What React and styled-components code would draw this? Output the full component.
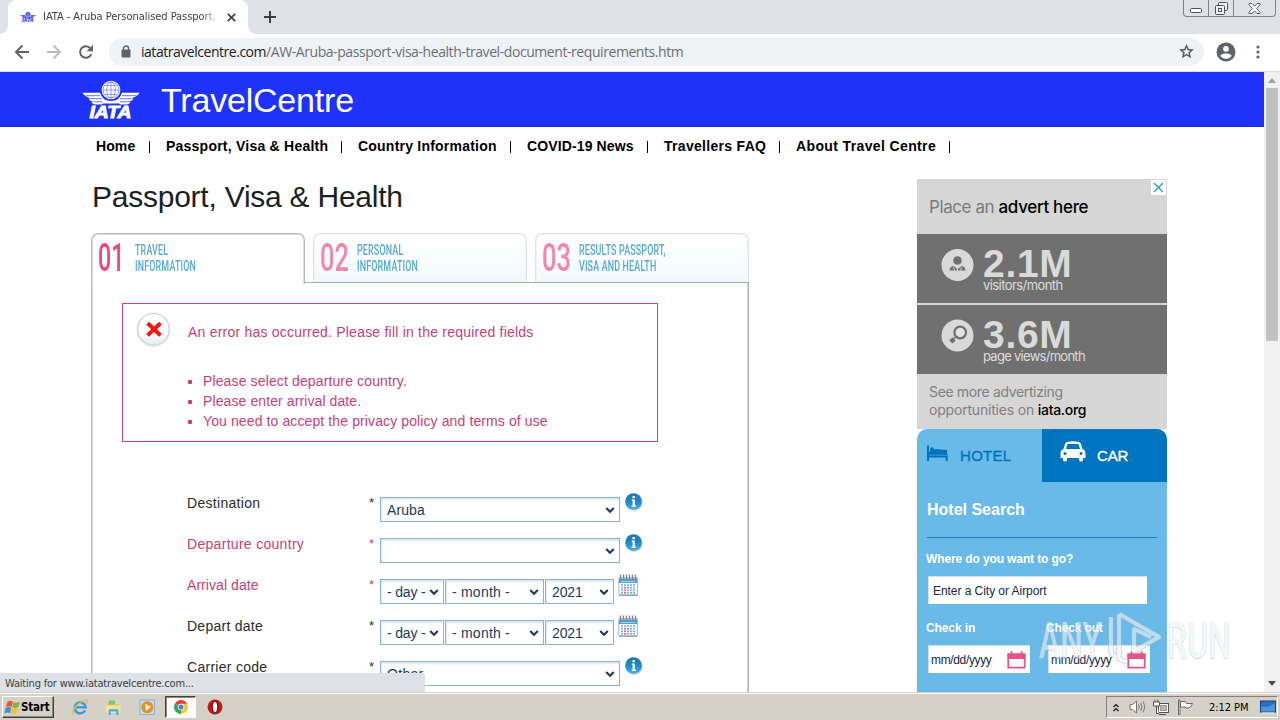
import React from "react";
import styled, { createGlobalStyle, css } from "styled-components";

const GlobalStyle = createGlobalStyle`
  *, *::before, *::after { box-sizing: border-box; }
  html, body { margin: 0; padding: 0; background: #fff; overflow: hidden; }
  body { font-family: "Liberation Sans", Arial, sans-serif; color: #222; }
  svg { display: block; flex: none; }
`;

const uiFont = `"DejaVu Sans Condensed", Tahoma, sans-serif`;
const adFont = `Inter, sans-serif`;
const pink = "#c73f78";

const Txt = styled.span`
  letter-spacing: ${(p) => p.$ls || 0}px;
  white-space: nowrap;
`;

const Desktop = styled.div`
  position: relative;
  width: 1280px;
  height: 720px;
  display: flex;
  flex-direction: column;
  overflow: hidden;
`;

/* ---------- browser chrome ---------- */
const TabStrip = styled.div`
  height: 34px;
  flex: none;
  background: #dee1e6;
  display: flex;
  align-items: flex-start;
  padding-left: 8px;
`;
const BrowserTab = styled.div`
  position: relative;
  width: 240px;
  height: 34px;
  background: #fff;
  border-radius: 8px 8px 0 0;
  display: flex;
  align-items: center;
  padding: 0 12px 0 12px;
  &::before, &::after {
    content: "";
    position: absolute;
    bottom: 0;
    width: 8px;
    height: 8px;
  }
  &::before { left: -8px; background: radial-gradient(circle at 0 0, transparent 7.5px, #fff 8px); }
  &::after { right: -8px; background: radial-gradient(circle at 100% 0, transparent 7.5px, #fff 8px); }
`;
const TabTitle = styled.div`
  width: 174px;
  margin-left: 7px;
  margin-right: 11px;
  overflow: hidden;
  white-space: nowrap;
  font: 11px/16px ${uiFont};
  letter-spacing: -0.04px;
  color: #3c4043;
  mask-image: linear-gradient(90deg, #000 158px, transparent 178px);
`;
const NewTab = styled.div`padding: 10px 0 0 15px;`;
const WindowButtons = styled.div`
  margin-left: auto;
  margin-right: 4px;
  width: 93px;
  height: 17px;
  border: 1px solid #7d828c;
  border-top: 0;
  border-radius: 0 0 4px 4px;
  display: flex;
`;
const WindowButton = styled.div`
  width: ${(p) => p.$w}px;
  display: flex;
  justify-content: center;
  align-items: center;
  padding-top: ${(p) => p.$pt || 0}px;
  & + & { border-left: 1px solid #7d828c; }
`;
const Toolbar = styled.div`
  height: 38px;
  flex: none;
  display: flex;
  align-items: center;
  padding: 0 14px 2px;
  border-bottom: 1px solid #dadce0;
`;
const NavIcons = styled.div`
  display: flex;
  gap: 16px;
  width: 95px;
`;
const Omnibox = styled.div`
  width: 1095px;
  height: 28px;
  border-radius: 14px;
  background: #f0f3f5;
  display: flex;
  align-items: center;
  padding: 0 9px 0 12px;
  font: 14px/20px "Open Sans", sans-serif;
  color: #6b7075;
`;
const Host = styled(Txt)`
  margin-left: 10px;
  color: #202124;
`;
const Spacer = styled.div`flex: 1;`;
const Avatar = styled.div`margin: 0 20px 0 12px;`;

/* ---------- page ---------- */
const Viewport = styled.div`
  height: 620px;
  flex: none;
  display: flex;
  overflow: hidden;
`;
const Page = styled.div`
  width: 1264px;
  height: 620px;
  overflow: hidden;
`;
const Scrollbar = styled.div`
  width: 16px;
  background: #f1f1f1;
  display: flex;
  flex-direction: column;
  align-items: center;
  padding: 6px 0 6px;
`;
const Thumb = styled.div`
  width: 12px;
  height: 253px;
  margin-top: 5px;
  background: #c1c1c1;
`;
const Banner = styled.header`
  height: 55px;
  background: #1e32fa;
  border-bottom: 1px solid #1a2ad2;
  display: flex;
  align-items: center;
  padding: 2px 0 0 82px;
`;
const BannerTitle = styled.h1`
  margin: 0 0 0 21px;
  font-weight: 400;
  font-size: 34px;
  line-height: 38px;
  letter-spacing: -0.2px;
  color: #fff;
`;
const NavBar = styled.nav`
  height: 50px;
  display: flex;
  padding: 11px 0 0 96px;
`;
const NavItem = styled.div`
  width: ${(p) => p.$w}px;
  margin-right: 16px;
  display: flex;
  justify-content: space-between;
  font-weight: 700;
  font-size: 14px;
  line-height: 16px;
  color: #000;
  &::after {
    content: "";
    width: 1px;
    height: 12px;
    margin-top: 3px;
    background: #000;
  }
`;
const Columns = styled.div`
  display: flex;
  align-items: flex-start;
`;
const MainColumn = styled.main`
  width: 658px;
  margin-left: 91px;
`;
const Heading = styled.h2`
  margin: 3px 0 19px 1px;
  font-weight: 400;
  font-size: 30px;
  line-height: 34px;
  letter-spacing: -0.24px;
  color: #1c1f22;
`;
const StepTabs = styled.div`
  display: flex;
  justify-content: space-between;
  height: 50px;
`;
const StepTab = styled.div`
  width: 214px;
  height: ${(p) => (p.$active ? 51 : 49)}px;
  display: flex;
  padding: 7px 0 0 6px;
  border-radius: 7px 7px 0 0;
  border: 1px solid #dfe3e5;
  border-bottom: 0;
  box-shadow: inset 0 0 0 1px #f1f3f4;
  background: linear-gradient(#fff 20%, #f1f9fe);
  ${(p) => p.$active && css`
    position: relative;
    z-index: 1;
    border-color: #b9b9b9;
    box-shadow: inset 1px 1px #dedede, inset -1px 0 #dedede;
    background: #fff;
  `}
`;
const StepNumber = styled.div`
  width: 34px;
  margin-top: -2px;
  font: 500 38px/38px Roboto, sans-serif;
  white-space: nowrap;
  transform: scaleX(${(p) => p.$sx});
  transform-origin: 0 0;
  color: ${(p) => (p.$active ? "#ee4484" : "#f584ae")};
`;
const StepLabel = styled.div`
  width: 0;
  margin-left: 3px;
  margin-top: 1px;
  font: 500 15.5px/16px Roboto, sans-serif;
  letter-spacing: 0.3px;
  white-space: nowrap;
  transform: scaleX(0.575);
  transform-origin: 0 0;
  color: #55a9d4;
`;
const Panel = styled.section`
  height: 420px;
  margin-top: -1px;
  border: 1px solid #b4b4b4;
  border-top-color: #a6adb1;
  box-shadow: inset 1px 0 #dcdcdc, inset -1px 0 #d4d4d4;
  padding: 20px 30px;
`;
const ErrorBox = styled.div`
  width: 536px;
  height: 139px;
  border: 1px solid #c9437b;
  display: flex;
  padding: 8px 0 0 13px;
  color: ${pink};
  font-size: 14px;
`;
const ErrorBody = styled.div`
  margin-left: 15px;
  padding-top: 12px;
  line-height: 16px;
`;
const ErrorList = styled.ul`
  margin: 31px 0 0;
  padding: 0;
  list-style: none;
  line-height: 20px;
`;
const ErrorItem = styled.li`
  display: flex;
  align-items: center;
  &::before {
    content: "";
    width: 4px;
    height: 4px;
    border-radius: 1px;
    margin: 2px 11px 0 0;
    background: ${pink};
  }
`;
const Form = styled.div`margin: 51px 0 0 65px;`;
const FormRow = styled.div`
  height: 41px;
  display: flex;
  align-items: flex-start;
  font-size: 14px;
  line-height: 16px;
  color: ${(p) => (p.$error ? pink : "#2c2c2c")};
`;
const FieldLabel = styled.div`
  width: 182px;
  padding-top: 2px;
`;
const Star = styled.div`
  width: 11px;
  padding-top: 2px;
  font-size: 13px;
`;
const Controls = styled.div`
  display: flex;
  padding-top: 4px;
  gap: 1px;
`;
const Select = styled.div`
  width: ${(p) => p.$w}px;
  height: 25px;
  border: 1px solid #86b4d4;
  box-shadow: inset 1px 2px 2px #dfe6ec;
  background: #fff;
  display: flex;
  align-items: center;
  justify-content: space-between;
  padding: 1px 4px 0 6px;
  color: #1d3a5f;
`;
const IconSlot = styled.div`
  margin-left: ${(p) => p.$ml}px;
  margin-top: ${(p) => p.$mt || 0}px;
`;

/* ---------- sidebar ---------- */
const Sidebar = styled.aside`
  width: 250px;
  margin: 2px 0 0 168px;
`;
const Ad = styled.div`
  position: relative;
  height: 250px;
  font-family: ${adFont};
  background: #d6d6d6;
`;
const AdClose = styled.div`
  position: absolute;
  top: 1px;
  right: 1px;
  width: 15px;
  height: 15px;
  background: #fff;
  display: flex;
  align-items: center;
  justify-content: center;
`;
const AdHead = styled.div`
  height: 55px;
  padding: 17px 0 0 12px;
  font-size: 17px;
  line-height: 22px;
  color: #7a7a7a;
  b { font-weight: 500; color: #000; }
`;
const AdStat = styled.div`
  height: 69px;
  margin-bottom: ${(p) => p.$mb || 0}px;
  background: #707070;
  display: flex;
  padding: 14px 0 0 24px;
`;
const AdStatText = styled.div`
  margin-left: 8px;
  display: flex;
  flex-direction: column;
`;
const AdNumber = styled(Txt)`
  margin-top: -2px;
  font: 700 39px/36px "Liberation Sans", sans-serif;
  color: #dadada;
`;
const AdCaption = styled(Txt)`
  margin-top: -5px;
  font-size: 13px;
  line-height: 16px;
  color: #dcdcdc;
`;
const AdFoot = styled.div`
  height: 55px;
  padding: 9px 0 0 12px;
  font-size: 14px;
  line-height: 18px;
  color: #808080;
  b { font-weight: 500; color: #000; }
`;
const Widget = styled.div`
  height: 300px;
  border-radius: 10px 10px 0 0;
  overflow: hidden;
  background: #69b9e9;
  color: #fff;
  font-weight: 700;
  font-size: 12px;
`;
const WidgetTabs = styled.div`
  display: flex;
  height: 53px;
`;
const WidgetTab = styled.div`
  width: 125px;
  display: flex;
  padding: ${(p) => p.$pad};
  gap: ${(p) => p.$gap}px;
  font: 400 15px/18px "Liberation Sans", sans-serif;
  -webkit-text-stroke: 0.35px currentColor;
  color: ${(p) => (p.$dark ? "#fff" : "#0072bc")};
  background: ${(p) => (p.$dark ? "#0075bf" : "transparent")};
`;
const WidgetTabText = styled(Txt)`padding-top: ${(p) => p.$pt}px;`;
const WidgetTitle = styled.div`
  margin: 0 10px;
  height: 56px;
  padding-top: 19px;
  font-size: 16px;
  line-height: 18px;
  border-bottom: 1px solid #1780c4;
`;
const WidgetLabel = styled.div`
  padding: ${(p) => p.$pt}px 0 0 9px;
  width: ${(p) => p.$w || 250}px;
  line-height: 14px;
`;
const TextInput = styled.div`
  width: ${(p) => p.$w}px;
  height: 28px;
  margin-left: ${(p) => p.$ml}px;
  padding: 1px 4px 0 ${(p) => p.$pl}px;
  background: #fff;
  box-shadow: inset 1px 1px 1px #d5dbe0;
  display: flex;
  align-items: center;
  justify-content: space-between;
  font-weight: 400;
  font-size: 12px;
  line-height: 14px;
  color: #14284b;
`;
const Row = styled.div`
  display: flex;
  margin-top: ${(p) => p.$mt || 0}px;
`;

/* ---------- overlays and taskbar ---------- */
const StatusBubble = styled.div`
  position: absolute;
  left: 0;
  top: 673px;
  width: 425px;
  height: 19px;
  padding-left: 5px;
  border-radius: 0 3px 0 0;
  background: #dee1e6;
  font: 11px/21px ${uiFont};
  color: #3c4043;
`;
const Watermark = styled.div`
  position: absolute;
  left: 1039px;
  top: 607px;
  display: flex;
  align-items: center;
  height: 62px;
  opacity: 0.6;
`;
const MarkWord = styled.div`
  width: ${(p) => p.$w}px;
  padding-top: 6px;
  font: 500 50px/62px Roboto, sans-serif;
  white-space: nowrap;
  transform: scaleX(0.64);
  transform-origin: 0 0;
  color: #eef2f4;
  text-shadow: 0 0 1px #a9b3ba, 0 1px 1px #bcc4ca;
`;
const Taskbar = styled.div`
  height: 28px;
  flex: none;
  background: #d5d1c8;
  box-shadow: inset 0 1px #d5d1c8, inset 0 2px #fff;
  display: flex;
  align-items: flex-start;
  padding: 4px 2px 0;
`;
const StartButton = styled.div`
  width: 52px;
  height: 22px;
  border: 1px solid;
  border-color: #fff #404040 #404040 #fff;
  box-shadow: inset -1px -1px #8c887f;
  display: flex;
  align-items: center;
  padding-left: 1px;
  font: 700 11.5px/16px ${uiFont};
  color: #000;
`;
const Launch = styled.div`
  width: ${(p) => p.$w}px;
  height: 22px;
  margin-left: ${(p) => p.$ml}px;
  display: flex;
  align-items: center;
  justify-content: center;
  ${(p) => p.$pressed && css`
    background: #fff;
    border: 1px solid;
    border-color: #404040 #fff #fff #404040;
    box-shadow: inset 1px 1px #8c887f;
  `}
`;
const Tray = styled.div`
  margin-left: auto;
  width: 172px;
  height: 22px;
  border: 1px solid;
  border-color: #85817a #fff #fff #85817a;
  display: flex;
  align-items: center;
  padding-left: 6px;
  font: 11px/16px ${uiFont};
  color: #000;
`;
const Clock = styled(Txt)`margin: 1px 11px 0 15px;`;

/* ---------- icons ---------- */
const IataLogo = ({ w = 58, h = 40, color = "#fff", bg = "#1e32fa" }) => (
  <svg width={w} height={h} viewBox="0 0 58 40" overflow="visible">
    <circle cx="29" cy="10" r="9.300" fill={color} />
    <g fill="none" stroke={bg} strokeWidth="0.550" opacity="0.800">
      <ellipse cx="29" cy="10" rx="4.300" ry="8" />
      <circle cx="29" cy="10" r="8" />
      <path d="M29 2v16M21 10h16M23 5.500h12M23 14.500h12" />
    </g>
    <g fill={color}>
      <path d="M.5 12.800H18q1 4 4.500 6.700L20 24.500h-7q-2.500-.3-3.500-2.600h3.500q-5-.2-6.500-3.300h3.800Q3 17.500.5 12.800z" />
      <path d="M57.500 12.800H40q-1 4-4.500 6.700l2.500 5h7q2.500-.3 3.500-2.600H45q5-.2 6.500-3.300h-3.800q7.300-1.100 9.800-5.800z" />
      <path d="M21.500 19q7.500 4 15 0l2 4.500h-19z" />
    </g>
    <path d="M3.500 15.700H18M9 18.700h11M12.500 21.800H20M54.500 15.700H40M49 18.700H38M45.500 21.800H38" stroke={bg} strokeWidth="0.700" />
    <text x="28.500" y="37.500" textAnchor="middle" textLength="42" lengthAdjust="spacingAndGlyphs" fontFamily="Liberation Sans, sans-serif" fontWeight="700" fontStyle="italic" fontSize="16.500" fill={color} stroke={color} strokeWidth="0.900">IATA</text>
  </svg>
);
const Stroke = ({ d, w = 14, h = 14, c = "#5f6368", sw = 2 }) => (
  <svg width={w} height={h} viewBox={`0 0 ${w} ${h}`} fill="none" stroke={c} strokeWidth={sw}><path d={d} /></svg>
);
const Reload = () => (
  <svg width="16" height="16" viewBox="0 0 16 16" fill="none">
    <path d="M13.300 10.200A5.800 5.800 0 1 1 12.400 4.300" stroke="#5f6368" strokeWidth="2" />
    <path d="M15 .8v6.400H8.600z" fill="#5f6368" />
  </svg>
);
const Lock = () => (
  <svg width="10" height="13" viewBox="0 0 10 13">
    <rect x="0.500" y="4.500" width="9" height="8" rx="1" fill="#5f6368" />
    <path d="M2.500 5V3.500a2.500 2.500 0 0 1 5 0V5" fill="none" stroke="#5f6368" strokeWidth="1.400" />
  </svg>
);
const StarIcon = () => (
  <svg width="17" height="17" viewBox="0 0 24 24">
    <path fill="#4f5358" stroke="#4f5358" strokeWidth="0.400" d="M22 9.240l-7.190-.62L12 2 9.190 8.630 2 9.240l5.460 4.730L5.820 21 12 17.270 18.180 21l-1.630-7.030L22 9.240zM12 15.400l-3.760 2.270 1-4.280-3.320-2.880 4.380-.38L12 6.100l1.710 4.040 4.380.38-3.320 2.880 1 4.280L12 15.400z" />
  </svg>
);
const AvatarIcon = () => (
  <svg width="20" height="20" viewBox="0 0 20 20">
    <circle cx="10" cy="10" r="9.500" fill="#5f6368" />
    <circle cx="10" cy="6.800" r="2.900" fill="#fff" />
    <path d="M4.200 13.800C5 11.900 8 11.400 10 11.400s5 .5 5.800 2.400a7 7 0 0 1-11.600 0z" fill="#fff" />
  </svg>
);
const Chevron = () => <Stroke w={10} h={7} d="M1.200 1L5 4.700 8.800 1" c="#1d3a5f" sw={2.1} />;
const ErrorIcon = () => (
  <svg width="37" height="36" viewBox="0 0 37 36">
    <defs><linearGradient id="ring" x1="0" y1="0" x2="0" y2="1"><stop offset="0.600" stopColor="#fff" /><stop offset="1" stopColor="#dcecf8" /></linearGradient></defs>
    <circle cx="17.500" cy="18" r="17" fill="#e9eced" />
    <circle cx="17.500" cy="17.200" r="15.800" fill="url(#ring)" stroke="#d3d7d9" strokeWidth="1.400" />
    <path d="M13 12.500l10 9.500M23 12.500L13 22" stroke="#fb1414" strokeWidth="4" strokeLinecap="square" />
  </svg>
);
const InfoIcon = () => (
  <svg width="18" height="18" viewBox="0 0 18 18">
    <defs><linearGradient id="info" x1="0" y1="0" x2="0" y2="1"><stop offset="0" stopColor="#1f76ae" /><stop offset="0.500" stopColor="#1c87c7" /><stop offset="1" stopColor="#41b4ea" /></linearGradient></defs>
    <circle cx="9" cy="9.300" r="8.500" fill="#b9bfc4" />
    <circle cx="8.500" cy="8.400" r="8.200" fill="url(#info)" />
    <path d="M7.500 3h2.300v2.200H7.500zM6.800 6.500h3v6h.9V14H6.700v-1.500h.9V8h-.8z" fill="#fff" />
  </svg>
);
const dots = [];
for (let y = 0; y < 4; y++) for (let x = 0; x < 5; x++) dots.push([x, y]);
const CalendarIcon = () => (
  <svg width="21" height="22" viewBox="0 0 21 22">
    <rect x="0.800" y="3.500" width="18.600" height="17.300" rx="1" fill="#fff" stroke="#bcc0c3" strokeWidth="1.200" />
    <path d="M1 21.300h18.500" stroke="#8f9497" strokeWidth="1" />
    <rect x="1" y="4.500" width="18.200" height="4.500" fill="#4aa3d4" />
    <path d="M3 7.500h14" stroke="#9fd2ee" strokeWidth="1" />
    <path d="M2.200.500L3 6M5.200.500L6 6M8.200.500L9 6M11.200.500l.8 5.500M14.200.500L15 6M17.200.500L18 6" stroke="#7e868b" strokeWidth="1.300" />
    {dots.map(([x, y]) => (
      <rect key={`${x}${y}`} x={3 + x * 3} y={10.200 + y * 2.600} width="1.900" height="1.700" fill={(x === 1 && y > 0) || (x === 2 && y === 1) ? "#d267a8" : "#6fb6d8"} />
    ))}
  </svg>
);
const PinkCalendar = () => (
  <svg width="19" height="18" viewBox="0 0 19 18">
    <path d="M1.300 3.500h16.400v13.200H1.300z" fill="#fff" stroke="#e8528f" strokeWidth="1.800" />
    <path d="M.5 2.500h18V8H.5z" fill="#e8528f" />
    <path d="M4.500.300v3.500M14.500.300v3.500" stroke="#e8528f" strokeWidth="1.800" />
  </svg>
);
const PersonBadge = () => (
  <svg width="34" height="34" viewBox="0 0 34 34">
    <circle cx="16.500" cy="17" r="16" fill="#d9d9d9" />
    <circle cx="16.500" cy="12.500" r="4.300" fill="#707070" />
    <path d="M8.500 22.500q.3-4.300 4-4.600l4 3.400 4-3.400q3.700.3 4 4.600z" fill="#707070" />
    <path d="M13.500 22.500l-1-3M19.500 22.500l1-3M16.500 21v2" stroke="#d9d9d9" strokeWidth="1" />
  </svg>
);
const SearchBadge = () => (
  <svg width="34" height="34" viewBox="0 0 34 34">
    <circle cx="16.500" cy="16.500" r="16" fill="#d9d9d9" />
    <circle cx="19.200" cy="13.500" r="5.800" fill="#e2e2e2" stroke="#707070" strokeWidth="2.200" />
    <path d="M14.600 17.800l-2 2" stroke="#707070" strokeWidth="1.300" />
    <path d="M11.400 18.200l3.200 3.200-3.200 3.200-3.200-3.200z" fill="#707070" />
  </svg>
);
const Bed = () => (
  <svg width="22" height="17" viewBox="0 0 22 17" fill="#0072bc">
    <path d="M0 .5h2V7h1V6q0-2.500 2.500-2.500T8 5.500V4q6 .5 12 1v4h.7v7h-2v-3.500H2V16H0z" />
    <path d="M2 10.200h18.500" stroke="#69b9e9" strokeWidth="0.600" />
    <circle cx="5" cy="4" r="1.800" />
  </svg>
);
const Car = () => (
  <svg width="26" height="21" viewBox="0 0 26 21">
    <path fill="#fff" d="M7 1q6-1.500 12 0 1.500.5 2 2l1.500 5Q25.500 9 25.500 12v5H23v2q-.3 1.500-2 1.500T19 19v-2H7v2q-.3 1.500-2 1.500T3 19v-2H.5v-5Q.5 9 3.500 8L5 3q.5-1.500 2-2z" />
    <path fill="#0075bf" d="M7.500 3h11L20 8H6z" />
    <circle cx="5" cy="12.500" r="1.500" fill="#0075bf" />
    <circle cx="21" cy="12.500" r="1.500" fill="#0075bf" />
  </svg>
);
const WinFlag = () => (
  <svg width="17" height="17" viewBox="0 0 17 17">
    <path d="M3.500 3Q6 .8 8.800 2.500L7.500 7.900Q5 6.300 1.800 8.200z" fill="#e8582c" />
    <path d="M9.500 2.900Q12 4.500 16 2.700L14.300 8.200Q11 9.600 8.200 8.200z" fill="#7ab83e" />
    <path d="M1.600 9Q4.500 7.200 7.200 8.800L6 14.200Q3.500 12.500.2 14.400z" fill="#3d8ed8" />
    <path d="M8 9.100Q11 10.700 14 9.200L12.500 14.700Q9.500 16.200 6.700 14.600z" fill="#f7c32e" />
  </svg>
);
const IE = () => (
  <svg width="18" height="18" viewBox="0 0 18 18" fill="none">
    <path d="M14.200 12.200A5.500 5.500 0 1 1 14.700 9.300H4.500" stroke="#3a9de0" strokeWidth="2.600" />
    <path d="M2.200 16.500C-1.500 13.500 9 2.500 15.500 1.800q2.500.7.300 4" stroke="#eebb3c" strokeWidth="1.300" />
  </svg>
);
const Folder = () => (
  <svg width="17" height="17" viewBox="0 0 17 17">
    <path d="M2 3h5l1.500 2H15v9H2z" fill="#e9c860" />
    <path d="M4 1.500h6v4H4z" fill="#86c56b" />
    <path d="M1 6.500h14.500V14H1z" fill="#f7e49a" />
    <path d="M3.500 16v-4.500q0-1.500 1.500-1.500h7q1.500 0 1.500 1.500V16h-2.500v-3.500h-5V16z" fill="#5db0e2" />
  </svg>
);
const Media = () => (
  <svg width="17" height="17" viewBox="0 0 17 17">
    <rect x="0.500" y="0.500" width="15.500" height="15.500" fill="#7eb6dc" />
    <rect x="1.500" y="1.500" width="13.500" height="13.500" fill="#c3ddee" />
    <circle cx="8.300" cy="8.300" r="6" fill="#f38b1c" />
    <path d="M6.500 4.800l5.500 3.500-5.500 3.500z" fill="#fff" />
  </svg>
);
const Chrome = () => (
  <svg width="14" height="14" viewBox="0 0 16 16">
    <path d="M8 8L1.100 4A8 8 0 0 1 14.900 4z" fill="#e2412f" />
    <path d="M8 8l6.900-4A8 8 0 0 1 8 16z" fill="#fbc72e" />
    <path d="M8 8v8A8 8 0 0 1 1.100 4z" fill="#35a353" />
    <path d="M8 4.400h7L11.200 10 8 16z" fill="#fbc72e" />
    <circle cx="8" cy="8" r="3.700" fill="#fff" />
    <circle cx="8" cy="8" r="2.900" fill="#4285f4" />
  </svg>
);
const Opera = () => (
  <svg width="16" height="16" viewBox="0 0 16 16">
    <circle cx="8" cy="8" r="7.500" fill="#c11a1a" />
    <ellipse cx="8" cy="8" rx="3.800" ry="6.500" fill="#8d0f10" />
    <ellipse cx="8" cy="8" rx="2.100" ry="5" fill="#fff" />
  </svg>
);
const Speaker = () => (
  <svg width="17" height="16" viewBox="0 0 17 16" fill="none" stroke="#777">
    <path d="M1 5.500h2.500L7.500 2v12l-4-3.500H1z" fill="#fff" />
    <path d="M9.500 5.500q1.500 2.500 0 5M11.700 4q2.500 4 0 8M13.900 2.500q3.300 5.500 0 11" stroke="#777" />
  </svg>
);
const Network = () => (
  <svg width="16" height="16" viewBox="0 0 16 16" stroke="#555" fill="#fff">
    <rect x="5.500" y="4.500" width="10" height="9" />
    <rect x="7.500" y="6.500" width="6" height="5" fill="#b8b8b8" stroke="#999" />
    <path d="M6 15.500h7M.5 3h6v4h-6zM2 .5V3M5 .5V3M3.500 7v7.500H6" />
  </svg>
);
const Flag = () => (
  <svg width="17" height="16" viewBox="0 0 17 16" stroke="#666" fill="#fff">
    <path d="M1.500 1h1.500v14.500H1.500z" />
    <path d="M3.500 2.500h5l1 2h6l-1.500 2.500L12 9H8.500V8h-5z" />
  </svg>
);
const Monitor = () => (
  <svg width="16" height="14" viewBox="0 0 16 14">
    <rect x="0.500" y="1" width="15" height="11" fill="#2c6fbf" stroke="#1b3f78" />
    <path d="M1 6Q7 9 15 3v8.500H1z" fill="#4b95dd" />
    <path d="M2 13h12" stroke="#e5edf5" />
  </svg>
);
const PlayMark = () => (
  <svg width="62" height="60" viewBox="0 0 62 60" fill="none" strokeLinejoin="round">
    <g stroke="#aab7bf" strokeWidth="5.600">
      <path d="M6 9v32q0 5 4 7M14 6v45l8 3M14 6l40 23-25 14V21l17 8" />
    </g>
    <g stroke="#f1f5f7" strokeWidth="3.800">
      <path d="M6 9v32q0 5 4 7M14 6v45l8 3M14 6l40 23-25 14V21l17 8" />
    </g>
  </svg>
);

/* ---------- data ---------- */
const navItems = [
  { t: "Home", w: 54, ls: 0.1 },
  { t: "Passport, Visa & Health", w: 176, ls: 0.23 },
  { t: "Country Information", w: 153, ls: 0.22 },
  { t: "COVID-19 News", w: 121, ls: 0.12 },
  { t: "Travellers FAQ", w: 116, ls: 0.3 },
  { t: "About Travel Centre", w: 154, ls: 0.37 },
];
const steps = [
  { n: "01", sx: 0.61, lines: ["TRAVEL", "INFORMATION"], active: true },
  { n: "02", sx: 0.67, lines: ["PERSONAL", "INFORMATION"] },
  { n: "03", sx: 0.67, lines: ["RESULTS PASSPORT,", "VISA AND HEALTH"] },
];
const errors = [
  { t: "Please select departure country.", ls: 0.13 },
  { t: "Please enter arrival date.", ls: 0.1 },
  { t: "You need to accept the privacy policy and terms of use", ls: 0.11 },
];
const dateSelects = [
  { t: "- day -", w: 64, ls: -0.17 },
  { t: "- month -", w: 99, ls: 0.22 },
  { t: "2021", w: 69, ls: -0.1 },
];
const rows = [
  { label: "Destination", ls: 0.3, selects: [{ t: "Aruba", w: 240, ls: 0.1 }] },
  { label: "Departure country", ls: 0.3, error: true, selects: [{ t: "", w: 240 }] },
  { label: "Arrival date", ls: 0.06, error: true, date: true, selects: dateSelects },
  { label: "Depart date", ls: 0.26, date: true, selects: dateSelects },
  { label: "Carrier code", ls: 0.28, selects: [{ t: "Other", w: 240, ls: 0.3 }] },
];

export default function App() {
  return (
    <Desktop>
      <GlobalStyle />
      <TabStrip>
        <BrowserTab>
          <IataLogo w={16} h={12} color="#4250e8" bg="#fff" />
          <TabTitle>IATA - Aruba Personalised Passport,</TabTitle>
          <Stroke w={9} h={9} d="M.8.800l7.400 7.400M8.200.800L.8 8.200" c="#3c4043" sw={1.7} />
        </BrowserTab>
        <NewTab><Stroke d="M7 1v12M1 7h12" c="#3c4043" /></NewTab>
        <WindowButtons>
          <WindowButton $w={24} $pt={4}>
            <svg width="12" height="6" viewBox="0 0 12 6"><rect x="0.500" y="1.500" width="11" height="4" rx="1" fill="#fff" stroke="#4d525b" /></svg>
          </WindowButton>
          <WindowButton $w={25}>
            <svg width="13" height="13" viewBox="0 0 13 13" fill="#f2f3f5" stroke="#4d525b"><rect x="3.500" y="0.500" width="9" height="8" rx="1" /><rect x="0.500" y="3.500" width="9" height="9" rx="1" /><rect x="3.500" y="6.500" width="3" height="3" /></svg>
          </WindowButton>
          <WindowButton $w={42}>
            <svg width="13" height="11" viewBox="0 0 13 11" fill="#fff" stroke="#4d525b" strokeWidth="0.900"><path d="M1 .500h3l2.500 2.600L9 .500h3v1.300L8.600 5.500 12 9.200v1.300H9L6.500 7.900 4 10.500H1V9.200l3.400-3.700L1 1.800z" /></svg>
          </WindowButton>
        </WindowButtons>
      </TabStrip>
      <Toolbar>
        <NavIcons>
          <Stroke w={16} h={16} d="M15 8H2.500M8.500 1.500L2 8l6.500 6.500" />
          <Stroke w={16} h={16} d="M1 8h12.500M7.500 1.500L14 8l-6.500 6.500" c="#babcbe" />
          <Reload />
        </NavIcons>
        <Omnibox>
          <Lock />
          <Host $ls={-0.47}>iatatravelcentre.com</Host>
          <Txt $ls={-0.43}>/AW-Aruba-passport-visa-health-travel-document-requirements.htm</Txt>
          <Spacer />
          <StarIcon />
        </Omnibox>
        <Avatar><AvatarIcon /></Avatar>
        <svg width="4" height="14" viewBox="0 0 4 14" fill="#5f6368"><circle cx="2" cy="2" r="1.600" /><circle cx="2" cy="7" r="1.600" /><circle cx="2" cy="12" r="1.600" /></svg>
      </Toolbar>

      <Viewport>
        <Page>
          <Banner>
            <IataLogo />
            <BannerTitle>TravelCentre</BannerTitle>
          </Banner>
          <NavBar>
            {navItems.map((n) => (
              <NavItem key={n.t} $w={n.w}><Txt $ls={n.ls}>{n.t}</Txt></NavItem>
            ))}
          </NavBar>
          <Columns>
            <MainColumn>
              <Heading>Passport, Visa &amp; Health</Heading>
              <StepTabs>
                {steps.map((s) => (
                  <StepTab key={s.n} $active={s.active}>
                    <StepNumber $active={s.active} $sx={s.sx}>{s.n}</StepNumber>
                    <StepLabel>{s.lines.map((l) => <div key={l}>{l}</div>)}</StepLabel>
                  </StepTab>
                ))}
              </StepTabs>
              <Panel>
                <ErrorBox>
                  <ErrorIcon />
                  <ErrorBody>
                    <Txt $ls={0.22}>An error has occurred. Please fill in the required fields</Txt>
                    <ErrorList>
                      {errors.map((e) => <ErrorItem key={e.t}><Txt $ls={e.ls}>{e.t}</Txt></ErrorItem>)}
                    </ErrorList>
                  </ErrorBody>
                </ErrorBox>
                <Form>
                  {rows.map((r) => (
                    <FormRow key={r.label} $error={r.error}>
                      <FieldLabel><Txt $ls={r.ls}>{r.label}</Txt></FieldLabel>
                      <Star>*</Star>
                      <Controls>
                        {r.selects.map((s, i) => (
                          <Select key={i} $w={s.w}><Txt $ls={s.ls}>{s.t}</Txt><Chevron /></Select>
                        ))}
                      </Controls>
                      <IconSlot $ml={r.date ? 4 : 5} $mt={r.date ? -1 : 0}>{r.date ? <CalendarIcon /> : <InfoIcon />}</IconSlot>
                    </FormRow>
                  ))}
                </Form>
              </Panel>
            </MainColumn>
            <Sidebar>
              <Ad>
                <AdClose><Stroke w={11} h={11} d="M1 1l9 9M10 1l-9 9" c="#2aa3b5" sw={1.4} /></AdClose>
                <AdHead><Txt $ls={-0.42}>Place an </Txt><b><Txt $ls={-0.33}>advert here</Txt></b></AdHead>
                <AdStat $mb={2}>
                  <PersonBadge />
                  <AdStatText><AdNumber $ls={0.7}>2.1M</AdNumber><AdCaption $ls={-0.57}>visitors/month</AdCaption></AdStatText>
                </AdStat>
                <AdStat>
                  <SearchBadge />
                  <AdStatText><AdNumber $ls={0.7}>3.6M</AdNumber><AdCaption $ls={-0.72}>page views/month</AdCaption></AdStatText>
                </AdStat>
                <AdFoot>
                  <Txt $ls={-0.35}>See more advertizing</Txt><br />
                  <Txt $ls={-0.19}>opportunities on </Txt><b><Txt $ls={-0.3}>iata.org</Txt></b>
                </AdFoot>
              </Ad>
              <Widget>
                <WidgetTabs>
                  <WidgetTab $pad="16px 0 0 10px" $gap={11}><Bed /><WidgetTabText $pt={2} $ls={0.3}>HOTEL</WidgetTabText></WidgetTab>
                  <WidgetTab $dark $pad="12px 0 0 18px" $gap={11}><Car /><WidgetTabText $pt={6} $ls={-0.2}>CAR</WidgetTabText></WidgetTab>
                </WidgetTabs>
                <WidgetTitle><Txt $ls={0}>Hotel Search</Txt></WidgetTitle>
                <WidgetLabel $pt={14}><Txt $ls={-0.12}>Where do you want to go?</Txt></WidgetLabel>
                <Row $mt={10}><TextInput $w={219} $ml={11} $pl={5}><Txt $ls={-0.05}>Enter a City or Airport</Txt></TextInput></Row>
                <Row $mt={17}>
                  <WidgetLabel $pt={0} $w={120}><Txt $ls={-0.1}>Check in</Txt></WidgetLabel>
                  <WidgetLabel $pt={0} $w={120}><Txt $ls={-0.15}>Check out</Txt></WidgetLabel>
                </Row>
                <Row $mt={10}>
                  <TextInput $w={102} $ml={11} $pl={3}><Txt $ls={-0.35}>mm/dd/yyyy</Txt><PinkCalendar /></TextInput>
                  <TextInput $w={102} $ml={18} $pl={3}><Txt $ls={-0.35}>mm/dd/yyyy</Txt><PinkCalendar /></TextInput>
                </Row>
              </Widget>
            </Sidebar>
          </Columns>
        </Page>
        <Scrollbar>
          <svg width="8" height="5" viewBox="0 0 8 5"><path d="M4 0l4 5H0z" fill="#a3a3a3" /></svg>
          <Thumb />
          <Spacer />
          <svg width="8" height="5" viewBox="0 0 8 5"><path d="M4 5L0 0h8z" fill="#505050" /></svg>
        </Scrollbar>
      </Viewport>

      <Taskbar>
        <StartButton><WinFlag /><Txt $ls={-0.2}>Start</Txt></StartButton>
        <Launch $w={18} $ml={17}><IE /></Launch>
        <Launch $w={17} $ml={16}><Folder /></Launch>
        <Launch $w={17} $ml={17}><Media /></Launch>
        <Launch $w={31} $ml={9} $pressed><Chrome /></Launch>
        <Launch $w={16} $ml={11}><Opera /></Launch>
        <Tray>
          <Stroke w={6} h={9} d="M.5 4L3 1.500 5.500 4M.5 8L3 5.500 5.500 8" c="#111" sw={1.2} />
          <IconSlot $ml={10}><Speaker /></IconSlot>
          <IconSlot $ml={7}><Network /></IconSlot>
          <IconSlot $ml={8}><Flag /></IconSlot>
          <Clock $ls={-0.05}>2:12 PM</Clock>
          <Monitor />
        </Tray>
      </Taskbar>

      <StatusBubble><Txt $ls={-0.19}>Waiting for www.iatatravelcentre.com...</Txt></StatusBubble>
      <Watermark>
        <MarkWord $w={66}>ANY</MarkWord>
        <PlayMark />
        <MarkWord $w={66}>RUN</MarkWord>
      </Watermark>
    </Desktop>
  );
}
